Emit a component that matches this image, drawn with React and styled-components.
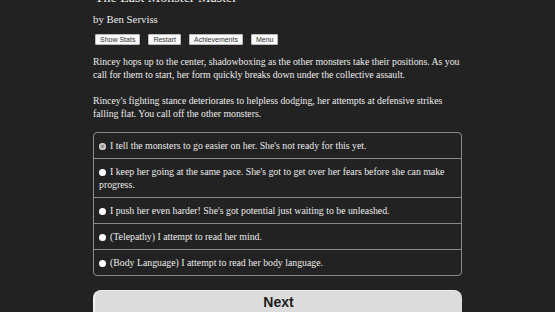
import React from "react";
import styled, { createGlobalStyle } from "styled-components";

const Global = createGlobalStyle`
  html, body { margin: 0; padding: 0; background: #222222; overflow: hidden; }
  body { font-family: "Liberation Serif", "Times New Roman", serif; color: #ececec; }
`;

const Page = styled.div`
  width: 369px;
  margin: 0 auto;
  display: flex;
  flex-direction: column;
`;

const Title = styled.h1`
  margin: -11px 0 0 2px;
  font-size: 14px;
  font-weight: normal;
  line-height: 18px;
  white-space: nowrap;
`;

const Author = styled.div`
  margin-top: 5px;
  font-size: 10.8px;
  line-height: 14px;
`;

const ButtonBar = styled.div`
  display: flex;
  gap: 8px;
  margin: 8px 0 0 2px;
`;

const SmallButton = styled.button`
  font-family: "Liberation Sans", Arial, sans-serif;
  font-size: 7px;
  line-height: 7px;
  padding: 1px 4px;
  background: #fafafa;
  color: #333333;
  border: 1px solid #bbb;
  border-radius: 1px;
`;

const Para = styled.p`
  margin: ${(p) => p.$top}px 0 0 0;
  font-size: 9.8px;
  letter-spacing: -0.02px;
  line-height: 13px;
`;

const Choices = styled.div`
  margin-top: 12px;
  border: 1px solid #8a8a8a;
  border-radius: 4px;
  display: flex;
  flex-direction: column;
`;

const Choice = styled.label`
  display: block;
  padding: 6px 5px 6px 5px;
  font-size: 9.8px;
  line-height: 13px;
  border-top: ${(p) => (p.$first ? "none" : "1px solid #8a8a8a")};
`;

const Radio = styled.span`
  display: inline-block;
  width: 7px;
  height: 7px;
  border-radius: 50%;
  background: ${(p) => (p.$checked ? "#9a9a9a" : "#ffffff")};
  box-shadow: ${(p) => (p.$checked ? "inset 0 0 0 1.5px #cfcfcf" : "none")};
  margin: 0 4px 0 0;
  vertical-align: -0.5px;
`;

const Next = styled.button`
  margin-top: 14px;
  height: 30px;
  width: 100%;
  background: #dcdcdc;
  border: none;
  border-left: 2px solid #f2f2f2;
  border-top: 1px solid #eeeeee;
  border-radius: 8px;
  font-family: "Liberation Sans", Arial, sans-serif;
  font-weight: bold;
  font-size: 14px;
  color: #1c1c1c;
  padding: 0 0 8px 0;
`;

const options = [
  "I tell the monsters to go easier on her. She's not ready for this yet.",
  "I keep her going at the same pace. She's got to get over her fears before she can make progress.",
  "I push her even harder! She's got potential just waiting to be unleashed.",
  "(Telepathy) I attempt to read her mind.",
  "(Body Language) I attempt to read her body language.",
];

export default function App() {
  return (
    <>
      <Global />
      <Page>
        <Title>The Last Monster Master</Title>
        <Author>by Ben Serviss</Author>
        <ButtonBar>
          <SmallButton>Show Stats</SmallButton>
          <SmallButton>Restart</SmallButton>
          <SmallButton>Achievements</SmallButton>
          <SmallButton>Menu</SmallButton>
        </ButtonBar>
        <Para $top={10}>
          Rincey hops up to the center, shadowboxing as the other monsters take their positions. As you call for them to start, her form quickly breaks down under the collective assault.
        </Para>
        <Para $top={13}>
          Rincey's fighting stance deteriorates to helpless dodging, her attempts at defensive strikes falling flat. You call off the other monsters.
        </Para>
        <Choices>
          {options.map((o, i) => (
            <Choice key={i} $first={i === 0}>
              <Radio $checked={i === 0} />
              {o}
            </Choice>
          ))}
        </Choices>
        <Next>Next</Next>
      </Page>
    </>
  );
}
